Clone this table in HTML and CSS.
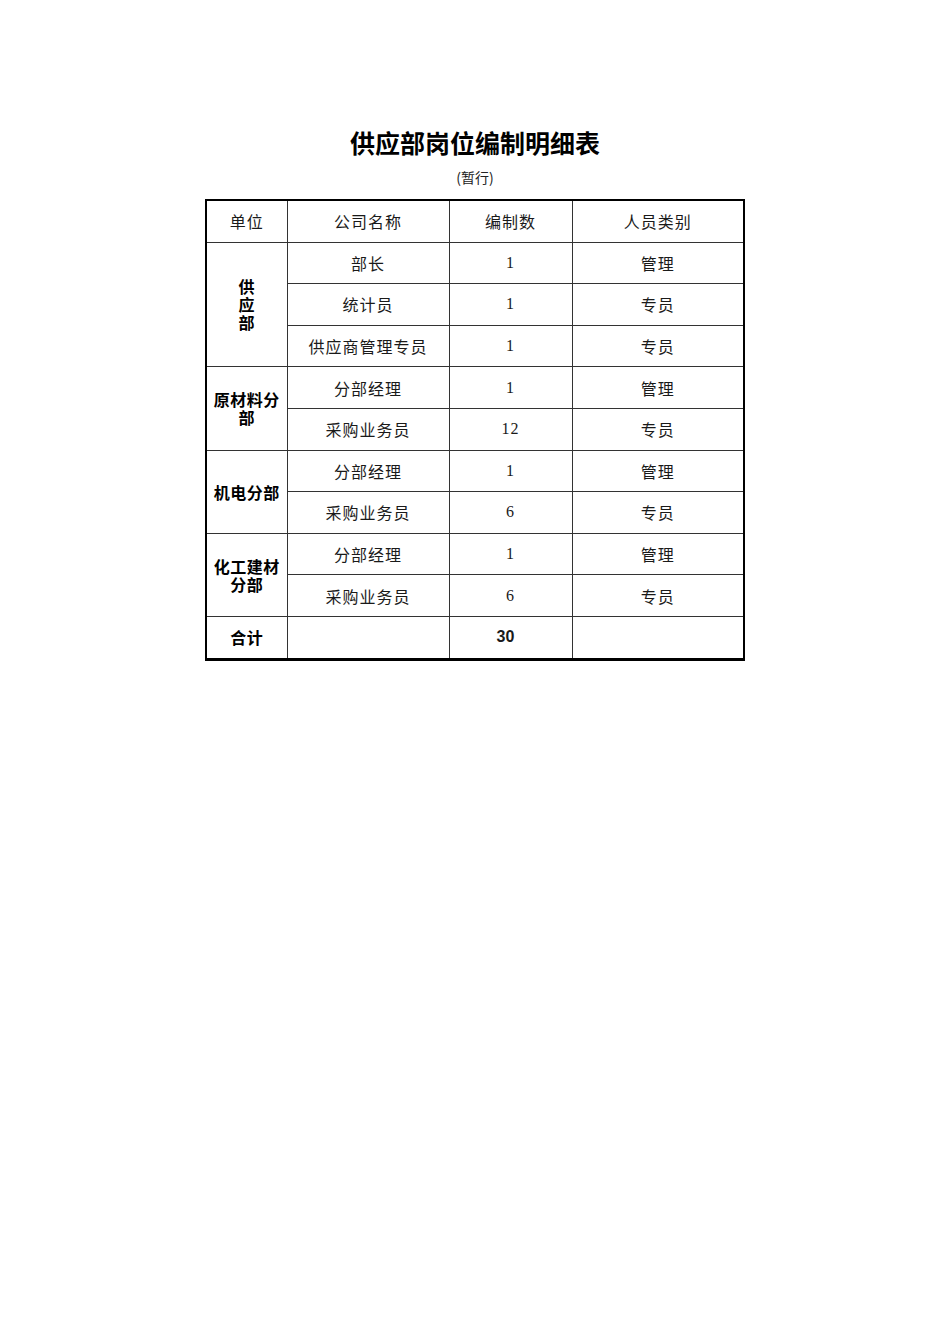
FILE: index.html
```html
<!DOCTYPE html>
<html lang="zh">
<head>
<meta charset="utf-8">
<title>供应部岗位编制明细表</title>
<link rel="stylesheet" href="styles.css">
</head>
<body>
<div class="page">
  <h1 class="title">供应部岗位编制明细表</h1>
  <div class="subtitle">(暂行)</div>
  <table class="sheet">
    <colgroup>
      <col class="c1"><col class="c2"><col class="c3"><col class="c4">
    </colgroup>
    <tr>
      <td>单位</td><td>公司名称</td><td>编制数</td><td>人员类别</td>
    </tr>
    <tr class="grp">
      <td rowspan="3" class="unit">供<br>应<br>部</td><td>部长</td><td class="num">1</td><td>管理</td>
    </tr>
    <tr><td>统计员</td><td class="num">1</td><td>专员</td></tr>
    <tr><td>供应商管理专员</td><td class="num">1</td><td>专员</td></tr>
    <tr class="grp">
      <td rowspan="2" class="unit">原材料分<br>部</td><td>分部经理</td><td class="num">1</td><td>管理</td>
    </tr>
    <tr><td>采购业务员</td><td class="num">12</td><td>专员</td></tr>
    <tr class="grp">
      <td rowspan="2" class="unit">机电分部</td><td>分部经理</td><td class="num">1</td><td>管理</td>
    </tr>
    <tr><td>采购业务员</td><td class="num">6</td><td>专员</td></tr>
    <tr class="grp">
      <td rowspan="2" class="unit">化工建材<br>分部</td><td>分部经理</td><td class="num">1</td><td>管理</td>
    </tr>
    <tr><td>采购业务员</td><td class="num">6</td><td>专员</td></tr>
    <tr class="grp">
      <td class="unit">合计</td><td></td><td class="total">30</td><td></td>
    </tr>
  </table>
</div>
</body>
</html>
```
FILE: styles.css
```css
html, body {
  margin: 0;
  padding: 0;
  background: #ffffff;
}
.page {
  width: 950px;
  padding-top: 124px;
  font-family: "Noto Sans CJK SC", sans-serif;
  color: #000;
}
.title {
  margin: 0;
  text-align: center;
  font-family: "Noto Sans CJK SC", sans-serif;
  font-weight: 700;
  font-size: 25px;
  line-height: 36px;
}
.subtitle {
  margin-top: 8px;
  text-align: center;
  font-size: 14px;
  line-height: 18px;
  color: #222;
}
.sheet {
  margin: 13px 0 0 205px;
  width: 538px;
  border-collapse: collapse;
  border: 2px solid #000;
  border-bottom-width: 3px;
  table-layout: fixed;
}
.c1 { width: 81px; }
.c2 { width: 162px; }
.c3 { width: 123px; }
.c4 { width: 172px; }
.sheet td {
  border: 1px solid #333;
  height: 40.6px;
  padding: 0;
  text-align: center;
  vertical-align: middle;
  font-size: 16px;
  letter-spacing: 1px;
  line-height: 20px;
  font-weight: 400;
  color: #1a1a1a;
}
.sheet tr.grp td {
  border-top: 1.5px solid #111;
}
.sheet td.unit {
  font-weight: 700;
  font-size: 16px;
  line-height: 18px;
  letter-spacing: 0.5px;
  color: #000;
}
.sheet td.num {
  font-family: "Liberation Serif", serif;
  font-size: 16px;
}
.sheet td.total {
  font-family: "Liberation Sans", sans-serif;
  font-weight: 700;
  font-size: 16px;
  letter-spacing: 0;
  padding-right: 10px;
}
```
